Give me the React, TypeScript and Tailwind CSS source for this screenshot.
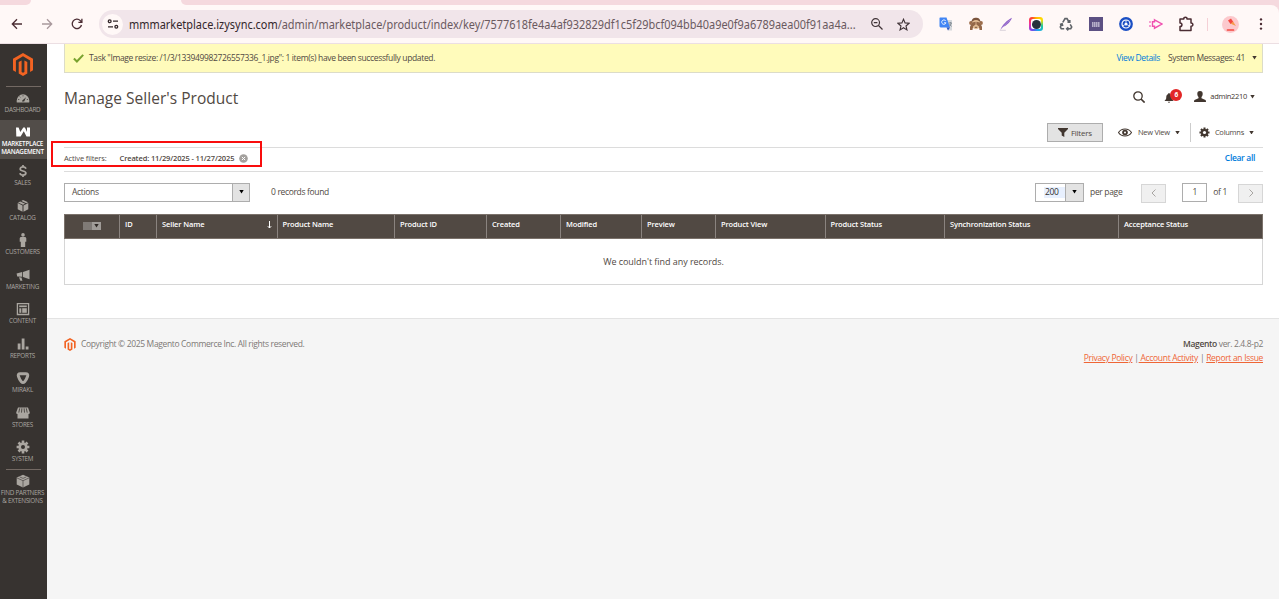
import type { ReactNode } from "react";
import { clsx } from "clsx";

type IconProps = { className?: string };

const MENU: { label: string[]; icon: ReactNode; active?: boolean; divided?: boolean; first?: boolean }[] = [
  {
    label: ["DASHBOARD"],
    first: true,
    icon: (
      <svg viewBox="0 0 14 14" className="size-3.5" fill="currentColor">
        <path
          fillRule="evenodd"
          d="M.8 11.5a6.2 6.6 0 0 1-.1-1.9A6.3 6.3 0 0 1 13.3 9.6a6.2 6.6 0 0 1-.1 1.9zM6 10.6h2.2L10 6.2 6.3 9.4z"
        />
        <path d="M2 8.5h1.3M3.6 5.6l.8.8M7 4.2v1.2M10.8 8.5H12" stroke="#373330" strokeWidth=".7" />
      </svg>
    ),
  },
  {
    label: ["MARKETPLACE", "MANAGEMENT"],
    active: true,
    icon: (
      <svg viewBox="0 0 14 10" className="h-2.5 w-3.5" fill="currentColor">
        <path d="M0 .5h2.6L4.3 5 7.3.5h1.6L11 5V.5h3v9h-3.500L7.800 4.300 4.600 9.500H.300z" />
      </svg>
    ),
  },
  {
    label: ["SALES"],
    icon: (
      <svg viewBox="0 0 14 14" className="size-3.5" fill="none" stroke="currentColor" strokeWidth="1.7">
        <path d="M9.9 4.8C9.6 3.5 8.5 2.9 7 2.9S4.2 3.6 4.2 4.9C4.2 7.6 9.9 6.3 9.9 9.1c0 1.3-1.2 2-2.9 2s-2.8-.7-3-2M7 1v2M7 11v2" />
      </svg>
    ),
  },
  {
    label: ["CATALOG"],
    icon: (
      <svg viewBox="0 0 14 14" className="size-3.5" fill="currentColor">
        <path d="m7 1 5 2.3-1.7.9-5-2.3zM4.3 2.4l4.9 2.3L7 5.7 2 3.4zM1.7 4.1l4.8 2.3v6.4l-4.8-2.5zM12.3 4.1 7.5 6.4v6.4l4.8-2.5z" />
      </svg>
    ),
  },
  {
    label: ["CUSTOMERS"],
    icon: (
      <svg viewBox="0 0 14 14" className="size-3.5" fill="currentColor">
        <circle cx="7" cy="1.9" r="1.8" />
        <path d="M5.3 4h3.4c1 0 1.6.6 1.6 1.6v3.2H9.2V14H4.8V8.8H3.7V5.6C3.7 4.6 4.3 4 5.3 4z" />
      </svg>
    ),
  },
  {
    label: ["MARKETING"],
    icon: (
      <svg viewBox="0 0 14 14" className="size-3.5" fill="currentColor">
        <path d="M13.5 1.8v9.4L7 8.9v-5zM.6 5.4 6.2 4v4.7L1.2 8.5zM3 9.3l2.5.1.9 3.4H4.3z" />
      </svg>
    ),
  },
  {
    label: ["CONTENT"],
    icon: (
      <svg viewBox="0 0 14 14" className="size-3.5" fill="none" stroke="currentColor" strokeWidth="1.3">
        <path d="M1.4 1.6h11.2v10.9H1.4z" />
        <path d="M3.2 4.3h7.6" strokeWidth="1.7" />
        <path d="M4.3 6.3v4.5" strokeWidth="2" />
        <path d="M6.2 6.2h4.6v4.6H6.2z" fill="currentColor" stroke="none" />
      </svg>
    ),
  },
  {
    label: ["REPORTS"],
    icon: (
      <svg viewBox="0 0 14 14" className="size-3.5" fill="currentColor">
        <path d="M1.7 6.4h2.8v6.2H1.7zM5.7 1.4h2.8v11.2H5.7zM9.7 9.4h2.8v3.2H9.7z" />
      </svg>
    ),
  },
  {
    label: ["MIRAKL"],
    icon: (
      <svg viewBox="0 0 14 14" className="size-3.5" fill="none" stroke="currentColor" strokeWidth="3">
        <path d="M4.2 2.7h5.6c1.6 0 2.3 1.2 1.8 2.5C10.9 7.4 9.8 9.4 8.6 10.8c-1 1-2.2 1-3.2 0C4.2 9.4 3.1 7.4 2.4 5.2 1.9 3.9 2.6 2.7 4.2 2.7z" />
      </svg>
    ),
  },
  {
    label: ["STORES"],
    icon: (
      <svg viewBox="0 0 14 14" className="size-3.5" fill="currentColor">
        <path d="M2 1.5h10l1.8 5c0 1-.6 1.5-1.3 1.5v4.5h-11V8C.8 8 .2 7.5.2 6.5z" />
        <path
          d="M3.7 2.3 2.8 6.6M5.9 2.3l-.4 4.3M8.1 2.3l.4 4.3M10.3 2.3l.9 4.3"
          stroke="#373330"
          strokeWidth=".8"
        />
      </svg>
    ),
  },
  { label: ["SYSTEM"], icon: <Gear className="size-3.5" hole="#373330" /> },
  {
    label: ["FIND PARTNERS", "& EXTENSIONS"],
    divided: true,
    icon: (
      <svg viewBox="0 0 14 14" className="size-3.5" fill="currentColor">
        <path d="M7 .7 13.3 3.4v7L7 13.4.7 10.4v-7z" />
        <path d="m.9 3.9 6.1 2.8 6.1-2.8M7 6.7v6.5M3.7 2.9l3.3 1.5 3.3-1.5" fill="none" stroke="#373330" strokeWidth=".6" />
      </svg>
    ),
  },
];

const COLUMNS = [
  { label: "ID", width: "w-[37px]" },
  { label: "Seller Name", width: "w-[120.5px]", sorted: true },
  { label: "Product Name", width: "w-[117.5px]" },
  { label: "Product ID", width: "w-[92px]" },
  { label: "Created", width: "w-[74px]" },
  { label: "Modified", width: "w-[81px]" },
  { label: "Preview", width: "w-[74px]" },
  { label: "Product View", width: "w-[109.5px]" },
  { label: "Product Status", width: "w-[119.5px]" },
  { label: "Synchronization Status", width: "w-[174px]" },
  { label: "Acceptance Status", width: "flex-1" },
];

function Gear({ className, hole }: IconProps & { hole: string }) {
  return (
    <svg viewBox="0 0 14 14" className={className}>
      <g stroke="currentColor" strokeWidth="2.6">
        <path d="M7 .6v12.8M.6 7h12.8M2.5 2.5l9 9M11.5 2.5l-9 9" />
      </g>
      <circle cx="7" cy="7" r="4.6" fill="currentColor" />
      <circle cx="7" cy="7" r="2" fill={hole} />
    </svg>
  );
}

function MagentoLogo({ className }: IconProps) {
  return (
    <svg viewBox="0 0 20 23" className={className} fill="#f26322">
      <path d="M10 0 20 5.8v11.5l-2.9 1.6V7.4L10 3.3 2.9 7.4v11.5L0 17.3V5.8z" />
      <path d="M5.7 9 8.6 7.4v11.5l1.4.8 1.4-.8V7.4L14.3 9v11.5L10 23l-4.3-2.5z" />
    </svg>
  );
}

function Caret({ className }: IconProps) {
  return (
    <svg viewBox="0 0 5 4" className={clsx("h-[3.5px] w-[5px] shrink-0", className)} fill="currentColor">
      <path d="M0 0h5L2.5 4z" />
    </svg>
  );
}

function Extensions() {
  return (
    <div className="flex items-center">
      <svg viewBox="0 0 14 14" className="size-3.5">
        <path d="M5.5 3H13v10.5H9z" fill="#d5d8dc" />
        <path d="M1 .5h6.5l3.500 10H1.500L.5 9.500V1z" fill="#4285f4" />
        <path d="M7.500 10.500H11l-2 3z" fill="#2a56c6" />
        <path d="M6.800 4A2.200 2.200 0 1 0 7 5.800H5" fill="none" stroke="#fff" strokeWidth=".9" />
        <path d="M9.500 6H13M11.300 5v1M12.300 6c-.3 1.500-1 2.500-2 3.200M10.500 7l2 2.500" fill="none" stroke="#6b7680" strokeWidth=".7" />
      </svg>
      <svg viewBox="0 0 14 14" className="ml-4 size-3.5">
        <circle cx="2" cy="6" r="1.9" fill="#9b6b49" />
        <circle cx="12" cy="6" r="1.9" fill="#9b6b49" />
        <path d="M2.500 5.500C2.500 2 4.500.8 7 .8s4.500 1.200 4.500 4.700l1 5.500h-11z" fill="#7b543c" />
        <ellipse cx="7" cy="7.600" rx="4.6" ry="4.6" fill="#e3bd94" />
        <path d="M1 10 3 5.500 6.600 4.800v2.700L4 9.500 3.500 13H1zM13 10l-2-4.500-3.600-.7v2.700L10 9.500l.5 3.500H13z" fill="#936748" />
        <path d="M5.800 10.300h2.400" stroke="#5a3828" strokeWidth=".8" />
      </svg>
      <svg viewBox="0 0 14 14" className="ml-4 size-3.5">
        <path d="M1.500 12.500C3 8.500 8 3 13 .8 11.500 4.500 8 8.500 4 10z" fill="#8d5fc7" />
        <path d="M1.500 12.700C4.500 9 8 5.500 11 3" fill="none" stroke="#c9aee6" strokeWidth=".5" />
        <path d="M.8 13.300h6" stroke="#c9c2cf" strokeWidth=".7" />
      </svg>
      <div className="ml-4 flex size-3.5 items-center justify-center rounded-[3px] bg-[conic-gradient(#ffb300,#ffe000_15%,#20c9a0_30%,#1aa8f0_45%,#7a45e8_60%,#f032a0_75%,#ff4030_90%,#ffb300)]">
        <div className="flex size-[10px] items-center justify-center rounded-[2px] bg-white">
          <div className="size-[9px] rounded-full bg-[#26323b]" />
        </div>
      </div>
      <svg viewBox="0 0 14 14" className="ml-4 size-3.5" fill="none" stroke="#5f6368" strokeWidth="1.6">
        <path d="M3.800 5.300 6 1.600h2l1.700 2.900M10.800 3v2.100H8.500M11.200 7.300l1.500 2.600-1 1.900H7.800M9.300 10.200l-1.600 1.600 1.600 1.600M5.200 11.800H2.300l-1-1.900L3 7M.9 7.400 3.100 6.800l.7 2.200" />
      </svg>
      <div className="ml-4 flex size-3.5 items-center justify-center bg-[#5c5083]">
        <div className="h-[5px] w-2 bg-[repeating-linear-gradient(90deg,#b5aec8_0_1px,#8d83a8_1px_2px)]" />
      </div>
      <svg viewBox="0 0 14 14" className="ml-4 size-3.5">
        <circle cx="7" cy="7" r="6.9" fill="#1b4fc4" />
        <circle cx="7" cy="7" r="4" fill="none" stroke="#fff" strokeWidth="1.2" />
        <circle cx="7" cy="7" r="1.5" fill="#fff" />
        <path d="M7 3v2.500M3.500 9l2.300-1.300M10.500 9 8.200 7.700" stroke="#fff" strokeWidth=".8" />
      </svg>
      <svg viewBox="0 0 14 14" className="ml-4 size-3.5" fill="none" stroke="#f04fb0" strokeWidth="1.4">
        <path d="M5.500 2.800 13 7l-7.500 4.200V9.300h-2V4.700h2z" />
        <path d="M1 4.200v1.600M1 8.200v1.600" />
      </svg>
      <svg viewBox="0 0 16 16" className="ml-[15px] size-4" fill="none" stroke="#4b2c33" strokeWidth="1.5">
        <path
          strokeLinejoin="round"
          d="M2 3h3.800c-.2-2.400 3.400-2.400 3.200 0h4v3.900c2.500-.1 2.500 3.500 0 3.400v4.200H2v-4c2.600 0 2.600-3.600 0-3.600z"
        />
      </svg>
    </div>
  );
}

function BrowserBar() {
  return (
    <header className="h-11 border-b border-[#ecdfe3] bg-[#f5d9de] font-['Noto_Sans',sans-serif]">
      <div className="flex h-[5px] bg-[#fff8f7]">
        <div className="w-[31px] rounded-br-[6px] bg-[#f5d9de]" />
        <div className="w-[150px]" />
        <div className="flex-1 rounded-bl-[6px] bg-[#f5d9de]" />
      </div>
      <div className="flex h-[38px] items-center rounded-tr-lg bg-[#fff8f7] pl-[11px] text-[#4b2c33]">
        <svg viewBox="0 0 12 12" className="size-3" fill="none" stroke="currentColor" strokeWidth="1.3">
          <path d="M11 6H1.500M6 1.300 1.300 6 6 10.700" />
        </svg>
        <svg viewBox="0 0 12 12" className="ml-[18px] size-3" fill="none" stroke="#a9999d" strokeWidth="1.3">
          <path d="M1 6h9.500M6 1.300 10.700 6 6 10.700" />
        </svg>
        <svg viewBox="0 0 12 12" className="ml-[18px] size-3" fill="none" stroke="currentColor" strokeWidth="1.3">
          <path d="M10.500 7A4.700 4.700 0 1 1 9.300 2.600L10.800 4.200M10.900.8v3.500H7.400" />
        </svg>
        <div className="ml-4 flex h-7 w-[824px] items-center rounded-full bg-[#f1e5ea] pl-[3px]">
          <div className="flex size-[21px] items-center justify-center rounded-full bg-[#fff8f7]">
            <svg viewBox="0 0 12 12" className="size-3" fill="none" stroke="#33272a" strokeWidth="1.3">
              <circle cx="2.700" cy="3.200" r="1.4" />
              <path d="M6 3.200h5M1 8.800h5" />
              <circle cx="9.300" cy="8.800" r="1.4" />
            </svg>
          </div>
          <p className="ml-[6px] w-[732px] shrink-0 origin-left scale-x-[0.911] pt-[2px] text-[12px] leading-none whitespace-nowrap text-[#6a5a5f]">
            <span className="text-[#33272a]">mmmarketplace.izysync.com</span>
            /admin/marketplace/product/index/key/7577618fe4a4af932829df1c5f29bcf094bb40a9e0f9a6789aea00f91aa4a...
          </p>
          <svg viewBox="0 0 12 12" className="ml-[10px] size-3 shrink-0" fill="none" stroke="#3f3236" strokeWidth="1.2">
            <circle cx="4.600" cy="4.600" r="3.9" />
            <path d="m7.500 7.500 4 4M2.800 4.600h3.600" />
          </svg>
          <svg viewBox="0 0 14 14" className="ml-[14px] size-[13px] shrink-0" fill="none" stroke="#3f3236" strokeWidth="1.2">
            <path d="m7 1.300 1.700 4 4.300.4-3.300 2.900 1 4.200L7 10.500l-3.700 2.300 1-4.200L1 5.700l4.300-.4z" />
          </svg>
        </div>
        <div className="ml-4">
          <Extensions />
        </div>
        <div className="ml-[13px] h-[13px] w-px bg-[#f5d0d6]" />
        <svg viewBox="0 0 17 17" className="ml-3.5 size-[17px]">
          <circle cx="8.500" cy="8.500" r="8.5" fill="#fcc9cd" />
          <path d="M6 4.500 9 2.500l2.500 3.800L8.500 8z" fill="#f4483f" />
          <path d="M11 5.500 14 10 8.800 7.800z" fill="#f59a4b" />
          <path d="M5.500 14h6" stroke="#f4483f" strokeWidth="1.7" strokeLinecap="round" />
        </svg>
        <svg viewBox="0 0 4 14" className="ml-5 h-3.5 w-1" fill="currentColor">
          <circle cx="2" cy="2.400" r="1.2" />
          <circle cx="2" cy="7" r="1.2" />
          <circle cx="2" cy="11.600" r="1.2" />
        </svg>
      </div>
    </header>
  );
}

function Sidebar() {
  return (
    <nav className="w-[47px] shrink-0 bg-[#373330] text-[#aaa6a0]">
      <div className="flex h-[42px] justify-center pt-[9px] pr-px">
        <MagentoLogo className="h-[23px] w-5" />
      </div>
      <div className="mx-[6px] h-px bg-[#736963]" />
      {MENU.map((item) => (
        <div key={item.label[0]}>
          {item.divided ? <div className="mx-[6px] h-px bg-[#736963]" /> : null}
          <div
            className={clsx(
              "flex flex-col items-center pr-[2px]",
              item.active && "h-[38.5px] bg-[#524d49] pt-[7px] font-semibold text-white",
              item.first && "h-[33px] pt-1",
              item.divided && "pt-[4px]",
              !item.active && !item.first && !item.divided && "h-[34.5px] pt-[5.5px]",
            )}
          >
            <span className={item.active ? "mb-[3px]" : "mb-px"}>{item.icon}</span>
            {item.label.map((line) => (
              <span key={line} className="text-[6.3px] leading-[8px] tracking-[-0.25px] whitespace-nowrap">
                {line}
              </span>
            ))}
          </div>
        </div>
      ))}
    </nav>
  );
}

function SystemMessage() {
  return (
    <div className="flex h-[29px] items-center border border-t-0 border-[#dcdcc8] bg-[#fffbbb] pr-[5px] pl-2 text-[8.5px] tracking-[-0.355px]">
      <svg viewBox="0 0 11 9" className="h-[9px] w-[11px]" fill="none" stroke="#79a22e" strokeWidth="2">
        <path d="m.9 4.500 3 3L10.200.9" />
      </svg>
      <span className="ml-[5px]">
        Task "Image resize: /1/3/133949982726557336_1.jpg": 1 item(s) have been successfully updated.
      </span>
      <a className="ml-auto text-[#007bdb]">View Details</a>
      <span className="ml-2">System Messages: 41</span>
      <Caret className="ml-[7px] text-[#41362f]" />
    </div>
  );
}

function PageHeader() {
  return (
    <div className="flex h-[48px] items-center">
      <h1 className="pt-[4px] text-[15.5px] tracking-[0.03px]">Manage Seller's Product</h1>
      <div className="ml-auto flex items-center pr-[8px] text-[#41362f]">
        <svg viewBox="0 0 12 12" className="size-3" fill="none" stroke="currentColor" strokeWidth="1.3">
          <circle cx="5" cy="5" r="4.2" />
          <path d="m8 8 3.600 3.600" strokeWidth="1.6" />
        </svg>
        <div className="relative ml-[19px] h-3.5 w-[19px]">
          <svg viewBox="0 0 10 11" className="mt-[3px] h-[10px] w-[10px]" fill="currentColor">
            <path d="M4.300 0h1.400v1C7.500 1.500 8 3 8 4.500 8 7 8.500 7.500 10 8.800H0C1.500 7.500 2 7 2 4.500 2 3 2.500 1.500 4.300 1zM3.500 9.500h3L5 11z" />
          </svg>
          <span className="absolute -top-px left-[6px] flex size-3 items-center justify-center rounded-full bg-[#e22626] text-[6.5px] font-bold text-white">
            6
          </span>
        </div>
        <svg viewBox="0 0 12 11" className="mb-[2px] ml-[11px] h-[11px] w-3" fill="currentColor">
          <path d="M6 0c2 0 2.800 1.300 2.700 3C8.600 4.600 8 5.500 7.500 6v1.300L11.500 9c.4.3.5 1 .5 2H0c0-1 .1-1.700.5-2l4-1.700V6C4 5.500 3.400 4.600 3.300 3 3.200 1.300 4 0 6 0z" />
        </svg>
        <span className="ml-1 text-[7.5px] tracking-[-0.3px]">admin2210</span>
        <Caret className="ml-[3px]" />
      </div>
    </div>
  );
}

function GridToolbar() {
  return (
    <div className="flex h-[27px] items-start border-b border-[#dcdcdc] pt-[2px] text-[7.5px] tracking-[-0.25px]">
      <button className="ml-auto flex h-[19px] w-14 items-center justify-center gap-[3px] border border-[#adadad] bg-[#e3e3e3] text-[8px]">
        <svg viewBox="0 0 10 9" className="h-[9px] w-[10px]" fill="#41362f">
          <path d="M0 0h10v1L6.300 4.800V9L3.700 7.500V4.800L0 1z" />
        </svg>
        Filters
      </button>
      <div className="ml-[15px] flex h-[19px] items-center text-[#41362f]">
        <svg viewBox="0 0 14 9" className="h-[9px] w-3.5">
          <path d="M.5 4.500C3.500-.2 10.500-.2 13.500 4.500 10.500 9.200 3.500 9.200.5 4.500z" fill="none" stroke="currentColor" strokeWidth="1.1" />
          <circle cx="7" cy="4.500" r="2.8" fill="currentColor" />
          <circle cx="7" cy="4.500" r="1" fill="#fff" />
        </svg>
        <span className="ml-[6px] text-[#514943]">New View</span>
        <Caret className="ml-[5px]" />
      </div>
      <div className="ml-2.5 flex h-[19px] items-center border-l border-[#ccc] pr-[9px] pl-2 text-[#41362f]">
        <Gear className="size-[11px]" hole="#fff" />
        <span className="ml-[5px] text-[#514943]">Columns</span>
        <Caret className="ml-[5px]" />
      </div>
    </div>
  );
}

function ActiveFilters() {
  return (
    <div className="relative flex h-6 items-center border-b border-[#dcdcdc] pr-2 pb-[2px] text-[7.5px] tracking-[-0.14px]">
      <span>Active filters:</span>
      <span className="ml-[13px] font-semibold">Created: 11/29/2025 - 11/27/2025</span>
      <svg viewBox="0 0 9 9" className="ml-[5px] size-[9px]">
        <circle cx="4.500" cy="4.500" r="4.3" fill="#a3a09d" />
        <path d="m2.900 2.900 3.200 3.200M6.100 2.900 2.900 6.100" stroke="#fff" strokeWidth="1" />
      </svg>
      <a className="ml-auto text-[8.5px] font-semibold tracking-[-0.33px] text-[#007bdb]">Clear all</a>
      <div className="absolute -top-[7px] -left-[13px] h-[26px] w-[211px] border-2 border-[#f90d0d]" />
    </div>
  );
}

function GridControls() {
  return (
    <div className="flex h-[42px] items-center pb-[2px] text-[8.5px] tracking-[-0.34px]">
      <div className="flex h-[19px] w-[186px] border border-[#adadad]">
        <span className="flex-1 pl-[7px] leading-4">Actions</span>
        <span className="flex w-[17px] items-center justify-center border-l border-[#adadad] bg-[#e3e3e3] text-black">
          <Caret />
        </span>
      </div>
      <span className="ml-[21px]">0 records found</span>
      <div className="ml-auto flex h-[19px] w-[49px] border border-[#adadad]">
        <span className="my-[3px] ml-2 flex flex-1 items-center bg-[#e8f0fe] pl-px text-[#303030]">200</span>
        <span className="flex w-[18px] items-center justify-center border-l border-[#adadad] bg-[#e3e3e3] text-black">
          <Caret />
        </span>
      </div>
      <span className="ml-[6px]">per page</span>
      <button className="mt-[2px] ml-[19px] flex h-[19px] w-[25px] items-center justify-center border border-[#d6d6d6] bg-[#f0f0f0]">
        <svg viewBox="0 0 6 8" className="h-2 w-1.5" fill="none" stroke="#a8a5a2">
          <path d="M4.500.5 1 4l3.500 3.500" />
        </svg>
      </button>
      <span className="ml-4 flex h-[19px] w-[25px] items-center justify-center border border-[#adadad]">1</span>
      <span className="ml-[6px]">of 1</span>
      <button className="mt-[2px] ml-[11px] flex h-[19px] w-[25px] items-center justify-center border border-[#d6d6d6] bg-[#f0f0f0]">
        <svg viewBox="0 0 6 8" className="h-2 w-1.5" fill="none" stroke="#a8a5a2">
          <path d="M1.500.5 5 4 1.500 7.500" />
        </svg>
      </button>
    </div>
  );
}

function ProductGrid() {
  return (
    <div>
      <div className="flex h-[25px] border border-[#7b726b] bg-[#514943] text-[7.5px] font-semibold tracking-[-0.13px] text-white">
        <div className="flex w-[54px] items-center justify-center pb-px">
          <span className="h-2 w-[9px] bg-[#7f7a76]" />
          <span className="flex h-2 w-[9px] items-center justify-center bg-[#a09c98] text-[#2e2825]">
            <Caret />
          </span>
        </div>
        {COLUMNS.map((c) => (
          <div
            key={c.label}
            className={clsx(
              "flex shrink-0 justify-between border-l border-[#8a837f] px-[5px] pt-1 leading-[11px] whitespace-nowrap",
              c.width,
            )}
          >
            {c.label}
            {c.sorted ? (
              <svg viewBox="0 0 5 8" className="mt-[2px] h-2 w-[5px]" fill="none" stroke="currentColor">
                <path d="M2.500 0v7M.8 5.200 2.500 7l1.700-1.800" />
              </svg>
            ) : null}
          </div>
        ))}
      </div>
      <div className="flex h-[46px] items-center justify-center border border-t-0 border-[#d6d6d6] text-[9px] tracking-[-0.05px]">
        We couldn't find any records.
      </div>
    </div>
  );
}

function Footer() {
  return (
    <footer className="mt-[33px] flex flex-1 items-start justify-between border-t border-[#e3e3e3] bg-[#f5f5f5] pt-[18px] pr-4 pl-[17px] text-[8.5px] leading-[14px] tracking-[-0.35px] text-[#7d7976]">
      <div className="flex items-center">
        <MagentoLogo className="h-[13px] w-3" />
        <span className="ml-[5px]">Copyright © 2025 Magento Commerce Inc. All rights reserved.</span>
      </div>
      <div className="text-right">
        <p>
          <strong className="font-semibold text-[#514943]">Magento</strong> ver. 2.4.8-p2
        </p>
        <p className="tracking-[-0.32px]">
          <a className="text-[#ef6535] underline">Privacy Policy</a> |
          <a className="whitespace-pre text-[#ef6535] underline"> Account Activity</a> |{" "}
          <a className="text-[#ef6535] underline">Report an Issue</a>
        </p>
      </div>
    </footer>
  );
}

export default function App() {
  return (
    <div className="flex h-[599px] w-[1279px] flex-col overflow-hidden bg-white font-['Open_Sans','Noto_Sans',sans-serif] text-[#514943]">
      <BrowserBar />
      <div className="flex min-h-0 flex-1">
        <Sidebar />
        <main className="flex flex-1 flex-col">
          <div className="pr-4 pl-[17px]">
            <SystemMessage />
            <PageHeader />
            <GridToolbar />
            <ActiveFilters />
            <GridControls />
            <ProductGrid />
          </div>
          <Footer />
        </main>
      </div>
    </div>
  );
}
